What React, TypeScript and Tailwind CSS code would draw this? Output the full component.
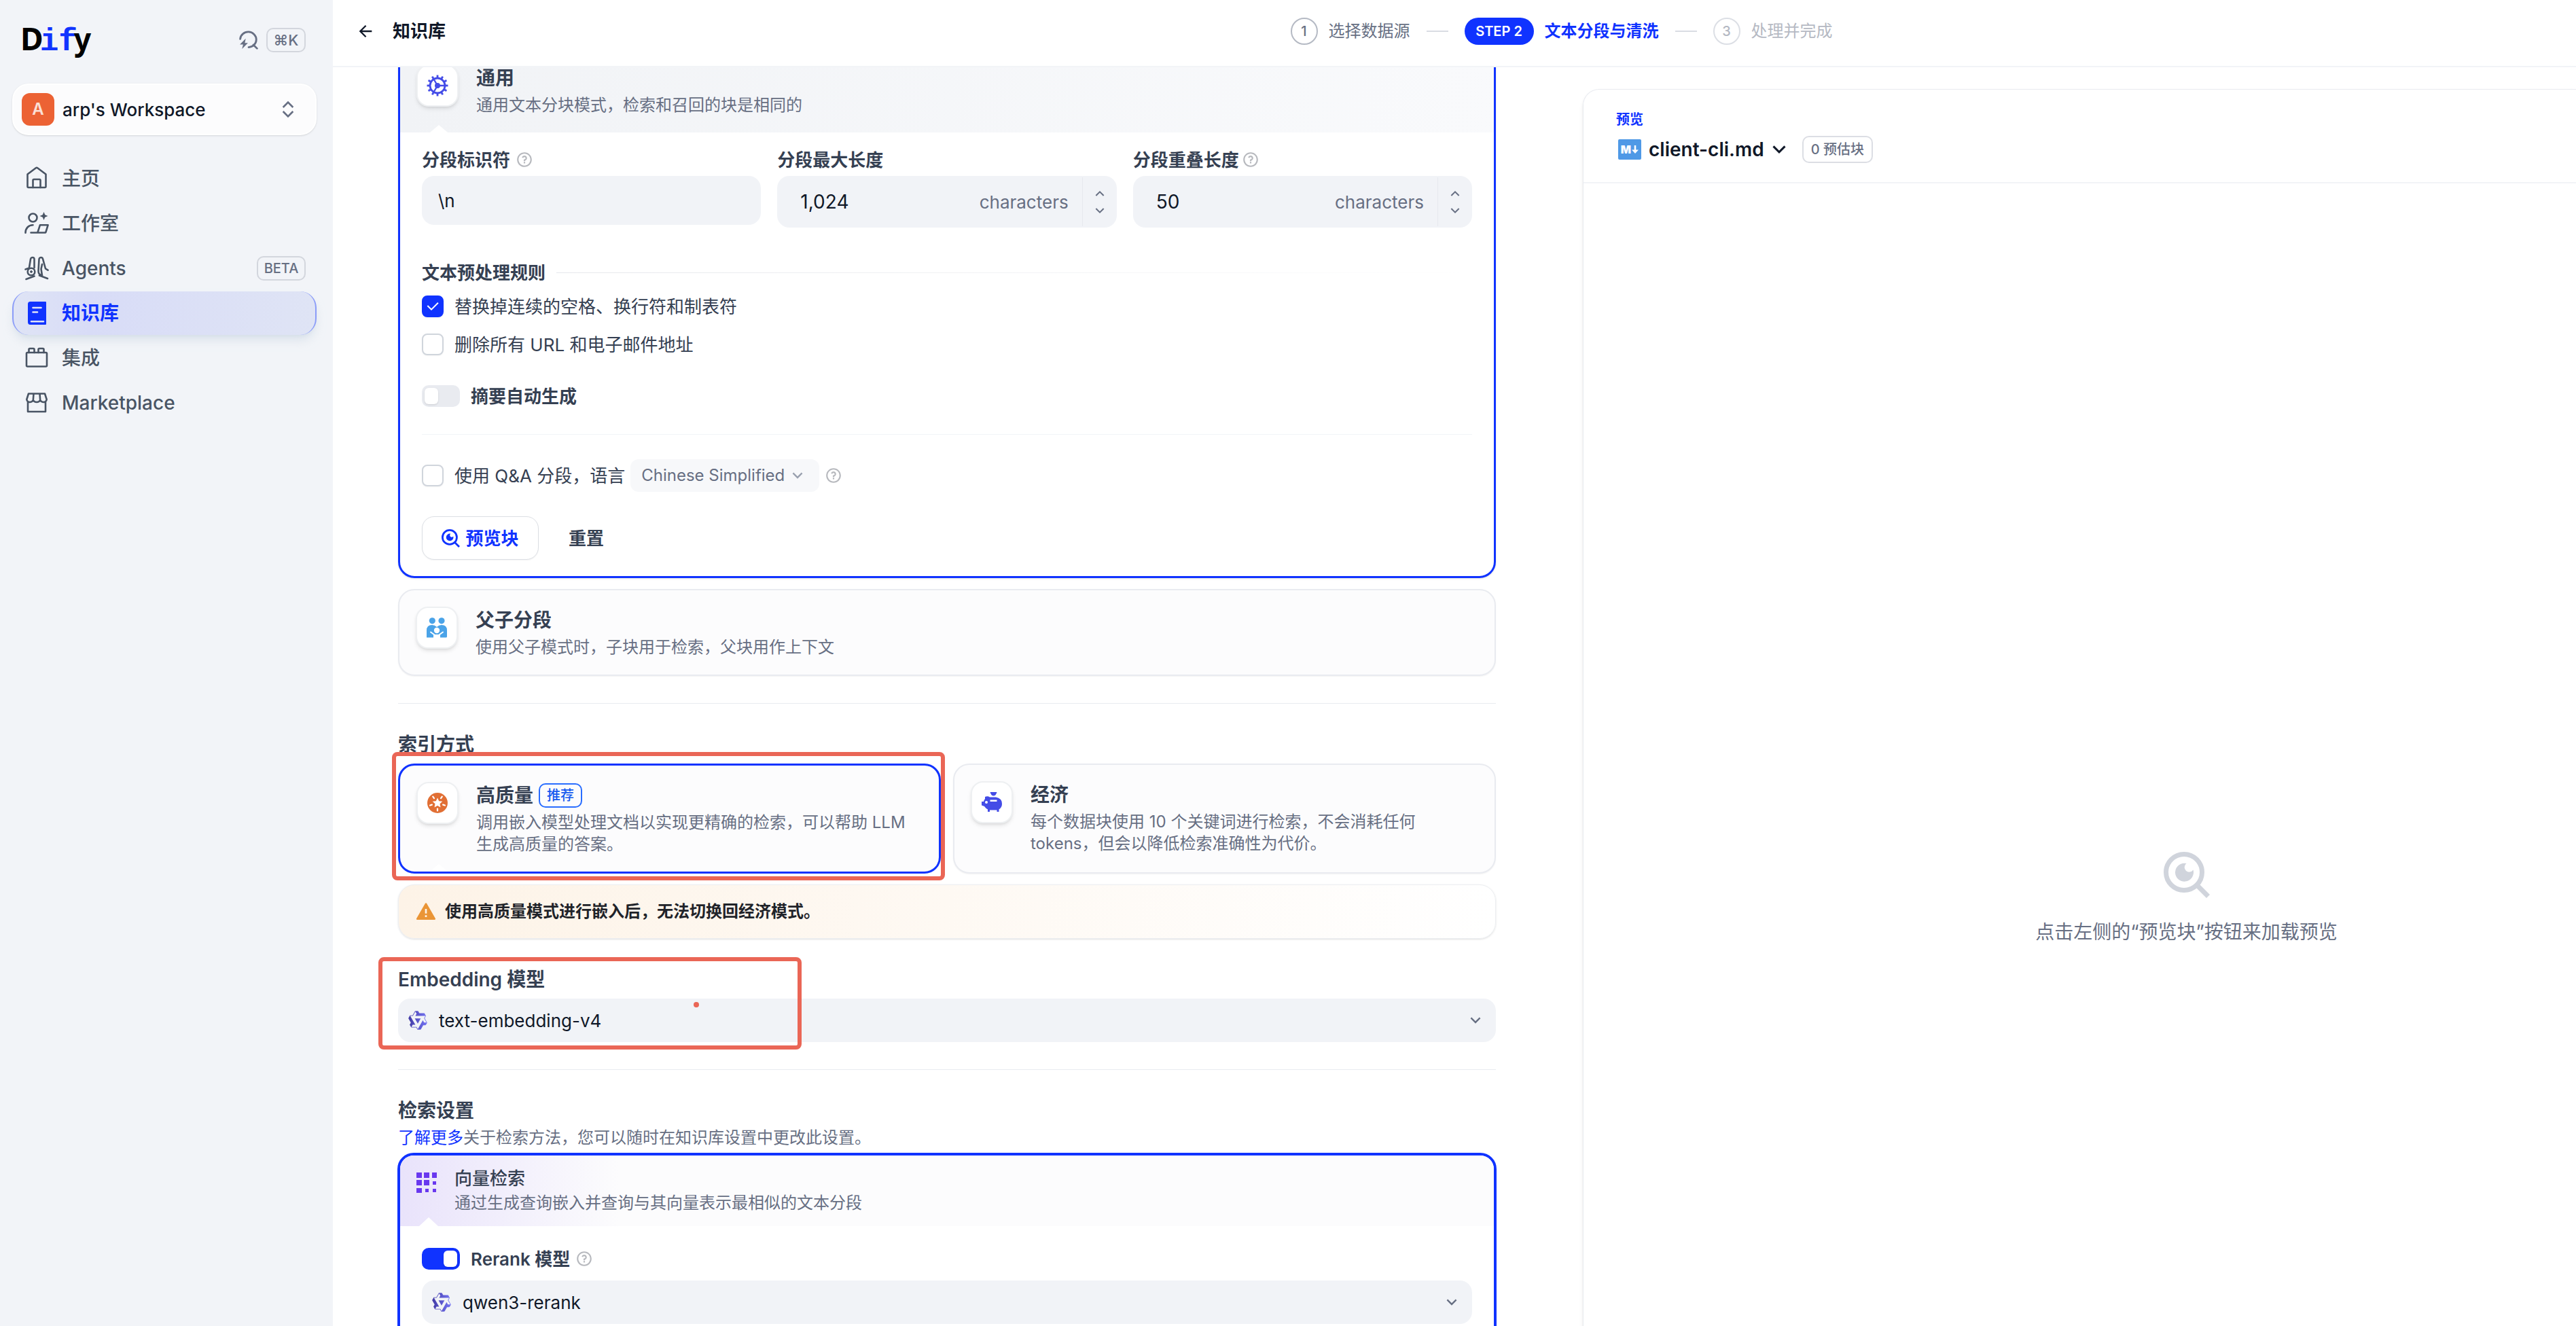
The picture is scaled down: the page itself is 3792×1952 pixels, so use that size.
import { useState } from 'react';
import type { ReactNode } from 'react';
import {
  RiAlertFill,
  RiArrowDownSLine,
  RiArrowLeftLine,
  RiArrowUpSLine,
  RiCheckLine,
  RiExpandUpDownLine,
  RiQuestionLine
} from 'react-icons/ri';

const stroke = {
  fill: 'none',
  stroke: 'currentColor',
  strokeWidth: 2.6,
  strokeLinecap: 'round',
  strokeLinejoin: 'round'
} as const;

const HomeIcon = () => (
  <svg viewBox="0 0 36 36" className="size-9" {...stroke}>
    <path d="M4.5 11.5 16.8 2.3q1.2-.9 2.4 0L31.5 11.5V29.5q0 1.5-1.5 1.5H6q-1.5 0-1.5-1.5Z" />
    <path d="M12.5 31V20.5q0-1.5 1.5-1.5h8q1.5 0 1.5 1.5V31" />
  </svg>
);

const StudioIcon = () => (
  <svg viewBox="0 0 36 36" className="size-9" {...stroke}>
    <circle cx="12.5" cy="9.5" r="6" />
    <path d="M1.5 31.800C1.5 25 6 20.3 12.5 20.3M9.5 31.5h9.8M19.3 31.5l3.6-11.2H34.6L31.5 30.5q-.3 1-1.3 1H19.3" />
    <path d="M28.5 1l1.8 4.2 4.2 1.8-4.2 1.8-1.8 4.2-1.8-4.2L22.5 7l4.2-1.8Z" fill="currentColor" stroke="none" />
  </svg>
);

const AgentsIcon = () => (
  <svg viewBox="0 0 36 36" className="size-9" {...stroke}>
    <path d="M7 17 9 4.5Q9.5 2 12 2q2.5 0 2.5 2.5V17M1.5 19.5l5-1.8M2.5 34l12-4.5" />
    <circle cx="10" cy="23" r="5.3" />
    <circle cx="10" cy="23" r="1.4" fill="currentColor" strokeWidth="1" />
    <path d="M26 28.5q-5.5-1-5.5-6.5L21.5 4.5Q22 2 24.5 2q2 0 2.6 2.3L31 18.5l3.5 2.2M26 12l-1.500 7 1.5 9.5M22 28.5l12 4.5" />
  </svg>
);

const KnowledgeIcon = () => (
  <svg viewBox="0 0 36 36" className="size-9">
    <path fill="currentColor" d="M8.5 1H31q1 0 1 1v32q0 1-1 1H8.5Q5 35 5 31V4.5Q5 1 8.5 1Z" />
    <path d="M12.5 10h12M12.5 16.5h6.5M10 30.2h18" stroke="#dfe3f7" strokeWidth="2.6" strokeLinecap="round" />
  </svg>
);

const IntegrationIcon = () => (
  <svg viewBox="0 0 36 36" className="size-9" {...stroke}>
    <rect x="3" y="10" width="30" height="20.5" rx="1.5" />
    <path d="M6.5 10V5.5q0-1.5 1.5-1.5h5q1.5 0 1.5 1.5V10M20.5 10V5.5q0-1.5 1.5-1.5h5q1.5 0 1.5 1.5V10" />
  </svg>
);

const MarketIcon = () => (
  <svg viewBox="0 0 36 36" className="size-9" {...stroke}>
    <path d="M6 4.5h24l2.7 8.5q-.7 4-4.5 4-3.5 0-5-3-1.5 3-5.2 3t-5.2-3q-1.5 3-5 3-3.800 0-4.5-4ZM13.5 4.5 12.8 14M22.5 4.5 23.2 14M5 17v14h26V17" />
  </svg>
);

const SearchIcon = () => (
  <svg viewBox="0 0 26 26" className="size-7" {...stroke}>
    <path d="M1.5 11.5a11 10.5 0 1 1 11.5 11.3M19.5 19.5l5 5" />
    <path d="M9 11 1 19h4.5L4 25l8-8H7.8Z" fill="currentColor" stroke="none" />
  </svg>
);

const GearIcon = () => (
  <svg viewBox="0 0 32 32" className="size-8 text-[#444ce7]" fill="none" stroke="currentColor">
    <circle cx="16" cy="16" r="11" strokeWidth="2.8" />
    <circle cx="16" cy="16" r="4" fill="currentColor" stroke="none" />
    <path d="M16 16h11M16 16l-5.5-9.5M16 16l-5.5 9.5" strokeWidth="2.4" />
    {Array.from({ length: 12 }).map((_, i) => (
      <path key={i} d="M16 .5v4" strokeWidth="2.8" transform={`rotate(${i * 30} 16 16)`} />
    ))}
  </svg>
);

const FamilyIcon = () => (
  <svg viewBox="0 0 30 30" className="size-[30px]">
    <g fill="#4aa3e8">
      <circle cx="8.3" cy="4.8" r="4.6" />
      <circle cx="22" cy="4.8" r="4.6" />
      <path d="M0 29.5V19q0-8 8-8 4 0 7 3 3-3 7-3 8 0 8 8v9q0 1.5-1.5 1.5Z" />
    </g>
    <circle cx="15" cy="19" r="4.2" fill="#fff" />
    <path d="M6 21.5l5.5 4M24 21.5l-5.5 4" stroke="#fff" strokeWidth="2" strokeLinecap="round" />
    <path d="M10 30v-4l2-1h6l2 1v4Z" fill="#fff" />
  </svg>
);

const QualityIcon = () => (
  <svg viewBox="0 0 30 30" className="size-[30px]">
    <circle cx="15" cy="15" r="15" fill="#e16f34" />
    <path d="M15 7.5l2.2 4.7 5.1.6-3.8 3.5 1 5.1L15 18.9l-4.5 2.5 1-5.1-3.8-3.5 5.1-.6Z" fill="#fff" />
    {Array.from({ length: 5 }).map((_, i) => (
      <path key={i} d="M15 23.5v3" stroke="#fff" strokeWidth="2.2" strokeLinecap="round" transform={`rotate(${i * 72} 15 15)`} />
    ))}
  </svg>
);

const PiggyIcon = () => (
  <svg viewBox="0 0 30 30" className="size-[30px]">
    <path
      fill="#444ce7"
      d="M12.5 0h10q-1.5 5.5-5 5.5t-5-5.5ZM5 7q4-1.5 7 .5h9q9 1.5 9 10 0 5-4.5 8V29h-3v-2.5H12V29H9v-3.5Q6 24 4 21L0 19.5V14h3q.5-2.5 2-4Z"
    />
    <circle cx="7" cy="15" r="2" fill="#fff" />
    <path d="M12.5 11.5h10V14h-10Z" fill="#fff" />
  </svg>
);

const VectorIcon = () => (
  <svg viewBox="0 0 30 30" className="mt-[7px] size-[30px] shrink-0" fill="#6938ef">
    <path d="M0 0h8v8H0ZM11 0h8v8h-8ZM23 0h7v8h-7ZM0 11h8v8H0ZM11 11h8v8h-8ZM24 13h5v5h-5ZM0 23h8v7H0ZM13 24h5v5h-5ZM24 24h5v5h-5Z" />
  </svg>
);

const PreviewIcon = ({ className }: { className: string }) => (
  <svg viewBox="0 0 68 68" className={className} fill="none" stroke="currentColor">
    <circle cx="30" cy="30" r="26.5" strokeWidth="7" />
    <path d="M49 49l16.5 16.5" strokeWidth="7" />
    <path d="M33.5 17A13.5 13.5 0 1 0 43.5 26.5 7 7 0 1 1 33.5 17Z" fill="currentColor" stroke="none" />
  </svg>
);

const QwenIcon = () => (
  <svg viewBox="0 0 24 24" className="size-[30px] shrink-0">
    <defs>
      <linearGradient id="qwen" x1="0" x2="1">
        <stop offset="0" stopColor="#423aa5" />
        <stop offset="1" stopColor="#7474f4" />
      </linearGradient>
    </defs>
    <path
      fill="url(#qwen)"
      fillRule="evenodd"
      d="M12.604 1.34c.393.69.784 1.382 1.174 2.075a.18.18 0 00.157.091h5.552c.174 0 .322.11.446.327l1.454 2.57c.19.337.24.478.024.837-.26.43-.513.864-.76 1.3l-.367.658c-.106.196-.223.28-.04.512l2.652 4.637c.172.301.111.494-.043.77-.437.785-.882 1.564-1.335 2.34-.159.272-.352.375-.68.37-.777-.016-1.552-.01-2.327.016a.099.099 0 00-.081.05 575.097 575.097 0 01-2.705 4.74c-.169.293-.38.363-.725.364-.997.003-2.002.004-3.017.002a.537.537 0 01-.465-.271l-1.335-2.323a.09.09 0 00-.083-.049H4.982c-.285.03-.553-.001-.805-.092l-1.603-2.77a.543.543 0 01-.002-.54l1.207-2.12a.198.198 0 000-.197 550.951 550.951 0 01-1.875-3.272l-.79-1.395c-.16-.31-.173-.496.095-.965.465-.813.927-1.625 1.387-2.436.132-.234.304-.334.584-.335a338.3 338.3 0 012.589-.001.124.124 0 00.107-.063l2.806-4.895a.488.488 0 01.422-.246c.524-.001 1.053 0 1.583-.006L11.704 1c.341-.003.724.032.9.34zm-3.432.403a.06.06 0 00-.052.03L6.254 6.788a.157.157 0 01-.135.078H3.253c-.056 0-.07.025-.041.074l5.81 10.156c.025.042.013.062-.034.063l-2.795.015a.218.218 0 00-.2.116l-1.32 2.31c-.044.078-.021.118.068.118l5.716.008c.046 0 .08.02.104.061l1.403 2.454c.046.081.092.082.139 0l5.006-8.76.783-1.382a.055.055 0 01.096 0l1.424 2.53a.122.122 0 00.107.062l2.763-.02a.04.04 0 00.035-.02.041.041 0 000-.04l-2.9-5.086a.108.108 0 010-.113l.293-.507 1.12-1.977c.024-.041.012-.062-.035-.062H9.2c-.059 0-.073-.026-.043-.077l1.434-2.505a.107.107 0 000-.114L9.225 1.774a.06.06 0 00-.053-.031zm6.29 8.02c.046 0 .058.02.034.06l-.832 1.465-2.613 4.585a.056.056 0 01-.05.029.058.058 0 01-.05-.029L8.498 9.841c-.02-.034-.01-.052.028-.054l.216-.012 6.722-.012z"
    />
  </svg>
);

const navItems = [
  { label: '主页', icon: HomeIcon },
  { label: '工作室', icon: StudioIcon },
  { label: 'Agents', icon: AgentsIcon, badge: 'BETA' },
  { label: '知识库', icon: KnowledgeIcon, active: true },
  { label: '集成', icon: IntegrationIcon },
  { label: 'Marketplace', icon: MarketIcon }
];

function Sidebar() {
  return (
    <aside className="w-[490px] shrink-0 bg-[#f2f4f8] pl-[18px] pr-6">
      <div className="flex h-[123px] items-start justify-between pl-3 pr-4 pt-[30px]">
        <a href="#" aria-label="Dify" className="flex items-baseline text-[46px] leading-[52px] text-black">
          <span className="font-['Noto_Sans'] font-bold">D</span>
          <span className="-mx-[5px] font-['Liberation_Mono'] font-bold text-[#1033ff]">if</span>
          <span className="font-['Noto_Sans'] text-[44px] font-bold">y</span>
        </a>
        <button type="button" className="mt-[11px] flex items-center gap-3 text-[#676f83]">
          <SearchIcon />
          <kbd className="flex h-9 w-[58px] items-center justify-center rounded-[10px] border-2 border-[#d3d6dd] font-[Inter] text-[22px] font-medium">
            ⌘K
          </kbd>
        </button>
      </div>
      <button
        type="button"
        className="flex h-[76px] w-full items-center gap-3 rounded-3xl border-2 border-white bg-[#fcfcfd] px-3 text-[26px] font-medium text-[#101828] shadow-sm"
      >
        <span className="flex size-12 items-center justify-center rounded-xl bg-[#ec6234] text-[24px] font-semibold text-white/80">A</span>
        <span className="flex-1 text-left">arp's Workspace</span>
        <RiExpandUpDownLine className="mr-3 size-8 text-[#676f83]" />
      </button>
      <nav className="mt-8 flex flex-col gap-[2px]">
        {navItems.map((item) => (
          <a
            key={item.label}
            href="#"
            className={
              item.active
                ? 'flex h-16 items-center rounded-3xl border-x-2 border-x-[#8b9cf8] bg-linear-to-r from-[#dfe4f5] via-[#d8dcf7] via-25% to-[#dfe4f5] pl-4 pr-[14px] text-[28px] font-bold text-[#1033ff] shadow-lg shadow-slate-300/60'
                : 'flex h-16 items-center pl-[18px] pr-4 text-[28px] font-medium text-[#495464]'
            }
          >
            <item.icon />
            <span className="ml-[19px] flex-1">{item.label}</span>
            {item.badge && (
              <span className="flex h-9 w-[72px] items-center justify-center rounded-[10px] border-2 border-[#d3d6dd] text-[20px] font-medium text-[#676f83]">
                {item.badge}
              </span>
            )}
          </a>
        ))}
      </nav>
    </aside>
  );
}

function Header() {
  return (
    <header className="flex h-[99px] items-center border-b-2 border-[#f2f4f7] pb-[6px]">
      <button type="button" className="flex w-[315px] shrink-0 items-center gap-[26px] pl-[34px] text-[26px] font-bold text-[#101828]">
        <RiArrowLeftLine className="size-7" />
        知识库
      </button>
      <ol className="flex flex-1 items-center justify-center gap-6 text-[24px]">
        <li className="flex items-center gap-4 text-[#676f83]">
          <span className="flex size-10 items-center justify-center rounded-full border-2 border-[#b5bac4] text-[20px] font-medium">1</span>
          选择数据源
        </li>
        <li aria-hidden className="h-[2px] w-8 bg-[#d9dce3]" />
        <li className="flex items-center gap-4 font-bold text-[#1033ff]">
          <span className="flex h-10 w-[102px] items-center justify-center rounded-full bg-[#1033ff] text-[20px] font-semibold text-white">STEP 2</span>
          文本分段与清洗
        </li>
        <li aria-hidden className="h-[2px] w-8 bg-[#d9dce3]" />
        <li className="flex items-center gap-4 text-[#b5b9c3]">
          <span className="flex size-10 items-center justify-center rounded-full border-2 border-[#dcdfe5] text-[20px] font-medium">3</span>
          处理并完成
        </li>
      </ol>
    </header>
  );
}

const Help = () => <RiQuestionLine className="size-[26px] text-[#b7b9be]" />;

function OptionHead({ icon, title, badge, children }: { icon: ReactNode; title: string; badge?: string; children: ReactNode }) {
  return (
    <div className="flex items-start gap-[26px] p-6">
      <span className="flex size-[62px] shrink-0 items-center justify-center rounded-[18px] border-2 border-[#eef0f2] bg-white shadow-md">{icon}</span>
      <div className="pt-1">
        <h3 className="flex h-8 items-center gap-2 text-[28px] font-semibold text-[#354052]">
          {title}
          {badge && <span className="rounded-[10px] border-2 border-[#296dff] px-[10px] text-[20px] font-medium leading-8 text-[#155aef]">{badge}</span>}
        </h3>
        <p className="mt-2 text-[24px] leading-8 text-[#676f83]">{children}</p>
      </div>
    </div>
  );
}

// small triangle that joins a card's head to its body
const Notch = () => <span className="absolute bottom-0 left-11 size-0 border-x-[13px] border-b-[11px] border-x-transparent border-b-white" />;

function NumberField({ id, label, help, value }: { id: string; label: string; help?: boolean; value: string }) {
  return (
    <div>
      <label htmlFor={id} className="flex h-8 items-center gap-1 text-[26px] font-semibold text-[#354052]">
        {label}
        {help && <Help />}
      </label>
      <div className="mt-2 flex h-[76px] items-center rounded-[18px] bg-[#f1f3f7]">
        <input id={id} defaultValue={value} className="w-0 flex-1 bg-transparent pl-[34px] text-[28px] text-[#101828] outline-none" />
        <span className="text-[26px] text-[#676f83]">characters</span>
        <span className="ml-5 flex h-[72px] w-[51px] flex-col items-center justify-center gap-px border-l border-[#e6e9ee] text-[#676f83]">
          <button type="button" aria-label="增加">
            <RiArrowUpSLine className="size-6" />
          </button>
          <button type="button" aria-label="减少">
            <RiArrowDownSLine className="size-6" />
          </button>
        </span>
      </div>
    </div>
  );
}

function Checkbox({ label, defaultChecked }: { label: string; defaultChecked?: boolean }) {
  return (
    <label className="flex h-8 items-center gap-4 text-[26px] text-[#354052]">
      <span className="grid place-items-center">
        <input
          type="checkbox"
          defaultChecked={defaultChecked}
          className="peer col-start-1 row-start-1 size-8 appearance-none rounded-lg border-2 border-[#d0d5dc] bg-white shadow-xs checked:border-[#1033ff] checked:bg-[#1033ff]"
        />
        <RiCheckLine className="pointer-events-none col-start-1 row-start-1 hidden size-6 text-white peer-checked:block" />
      </span>
      {label}
    </label>
  );
}

function Switch({ label, on, help }: { label: string; on?: boolean; help?: boolean }) {
  const [checked, setChecked] = useState(!!on);

  return (
    <label className="flex h-8 items-center gap-4 text-[26px] font-semibold text-[#354052]">
      <input
        type="checkbox"
        role="switch"
        checked={checked}
        onChange={(e) => setChecked(e.target.checked)}
        className="flex h-8 w-14 appearance-none items-center rounded-[10px] bg-[#e9ebf0] px-1 before:block before:h-6 before:w-5 before:rounded-md before:bg-white before:shadow-sm before:content-[''] checked:justify-end checked:bg-[#1033ff]"
      />
      <span className="flex items-center gap-2">
        {label}
        {help && <Help />}
      </span>
    </label>
  );
}

function ModelSelect({ label, model }: { label: string; model: string }) {
  return (
    <div className="flex h-16 items-center gap-4 rounded-[18px] bg-[#f1f3f7] pl-[14px] pr-4">
      <QwenIcon />
      <select aria-label={label} className="flex-1 appearance-none bg-transparent text-[26px] text-[#101828] outline-none">
        <option>{model}</option>
      </select>
      <RiArrowDownSLine className="pointer-events-none size-7 text-[#676f83]" />
    </div>
  );
}

function GeneralCard() {
  return (
    <section className="-mt-[31px] rounded-3xl border-3 border-[#1033ff] shadow-sm">
      <div className="relative rounded-t-[21px] bg-linear-to-r from-[#f1f3f6] to-[#f9fafc]">
        <OptionHead icon={<GearIcon />} title="通用">
          通用文本分块模式，检索和召回的块是相同的
        </OptionHead>
        <Notch />
      </div>
      <div className="px-8 py-6">
        <div className="grid grid-cols-3 gap-6">
          <div>
            <label htmlFor="separator" className="flex h-8 items-center gap-2 text-[26px] font-semibold text-[#354052]">
              分段标识符
              <Help />
            </label>
            <input
              id="separator"
              defaultValue="\n"
              className="mt-2 block h-[72px] w-full rounded-[18px] bg-[#f1f3f7] px-6 text-[26px] text-[#101828] outline-none"
            />
          </div>
          <NumberField id="max-length" label="分段最大长度" value="1,024" />
          <NumberField id="overlap" label="分段重叠长度" help value="50" />
        </div>
        <div className="mt-12 flex h-9 items-center gap-4 text-[26px] font-bold text-[#354052]">
          文本预处理规则
          <span className="h-px flex-1 bg-linear-to-r from-[#e6e8ec] to-transparent" />
        </div>
        <div className="mt-4 flex flex-col gap-6">
          <Checkbox label="替换掉连续的空格、换行符和制表符" defaultChecked />
          <Checkbox label="删除所有 URL 和电子邮件地址" />
        </div>
        <div className="mt-11">
          <Switch label="摘要自动生成" />
        </div>
        <hr className="mt-10 border-[#f2f4f7]" />
        <div className="mt-9 flex items-center">
          <Checkbox label="使用 Q&A 分段，语言" />
          <div className="ml-2 flex h-12 items-center rounded-xl bg-[#f7f8fa] pl-4 pr-[18px] text-[#676f83]">
            <select aria-label="语言" className="appearance-none bg-transparent text-[24px] outline-none">
              <option>Chinese Simplified</option>
            </select>
            <RiArrowDownSLine className="pointer-events-none ml-1 size-7 text-[#9aa1af]" />
          </div>
          <span className="ml-2">
            <Help />
          </span>
        </div>
        <div className="mt-9 flex gap-4 text-[26px] font-semibold">
          <button type="button" className="flex h-16 w-[172px] items-center justify-center gap-2 rounded-[18px] border border-[#dcdfe4] bg-white text-[#1033ff] shadow-xs">
            <PreviewIcon className="size-[27px]" />
            预览块
          </button>
          <button type="button" className="h-16 px-7 text-[#354052]">
            重置
          </button>
        </div>
      </div>
    </section>
  );
}

const SectionTitle = ({ children }: { children: ReactNode }) => (
  <h2 className="mt-10 h-10 text-[28px] font-semibold leading-10 text-[#354052]">{children}</h2>
);

function Settings() {
  return (
    <div className="pl-24 pr-32">
      <GeneralCard />
      <section className="mt-4 rounded-3xl border-2 border-[#e9ebf0] bg-[#fcfcfd] shadow-xs">
        <OptionHead icon={<FamilyIcon />} title="父子分段">
          使用父子模式时，子块用于检索，父块用作上下文
        </OptionHead>
      </section>
      <hr className="mt-10 border-[#e9ebf0]" />

      <SectionTitle>索引方式</SectionTitle>
      <div className="mt-2 grid grid-cols-2 gap-[18px]">
        <div className="relative rounded-3xl border-3 border-[#1033ff] bg-[#fcfcfd]">
          <OptionHead icon={<QualityIcon />} title="高质量" badge="推荐">
            调用嵌入模型处理文档以实现更精确的检索，可以帮助 LLM
            <br />
            生成高质量的答案。
          </OptionHead>
          <Notch />
          <span className="pointer-events-none absolute -bottom-[13px] -left-3 -right-[9px] -top-5 rounded-lg border-6 border-[#ea6656]" />
        </div>
        <div className="rounded-3xl border-2 border-[#e9ebf0] bg-[#fcfcfd] shadow-xs">
          <OptionHead icon={<PiggyIcon />} title="经济">
            每个数据块使用 10 个关键词进行检索，不会消耗任何
            <br />
            tokens，但会以降低检索准确性为代价。
          </OptionHead>
        </div>
      </div>
      <div className="mt-4 flex h-20 items-center gap-3 rounded-3xl border border-[#eceef1] bg-linear-to-r from-[#fdf3e7] to-white px-6 text-[24px] font-semibold text-[#1f2329] shadow-sm">
        <RiAlertFill className="size-8 text-[#ea9536]" />
        使用高质量模式进行嵌入后，无法切换回经济模式。
      </div>

      <section className="relative">
        <SectionTitle>Embedding 模型</SectionTitle>
        <div className="mt-2">
          <ModelSelect label="Embedding 模型" model="text-embedding-v4" />
        </div>
        <span className="pointer-events-none absolute -left-[29px] -top-[13px] h-[136px] w-[623px] rounded-lg border-6 border-[#ea6656]" />
        <span className="pointer-events-none absolute left-[435px] top-[53px] size-2 rounded-full bg-[#ea6656]" />
      </section>
      <hr className="mt-10 border-[#e9ebf0]" />

      <SectionTitle>检索设置</SectionTitle>
      <p className="mt-1 text-[24px] leading-8 text-[#676f83]">
        <a href="#" className="text-[#1033ff]">
          了解更多
        </a>
        关于检索方法，您可以随时在知识库设置中更改此设置。
      </p>
      <section className="-mx-px mt-[6px] rounded-3xl border-4 border-[#1033ff]">
        <div className="relative flex gap-[26px] rounded-t-[20px] bg-[#fcfcfd] bg-linear-to-r from-[#e9e3fb] to-transparent to-20% px-6 py-[18px]">
          <VectorIcon />
          <div>
            <h3 className="text-[26px] font-medium leading-8 text-[#354052]">向量检索</h3>
            <p className="mt-1 text-[24px] leading-8 text-[#676f83]">通过生成查询嵌入并查询与其向量表示最相似的文本分段</p>
          </div>
          <span className="absolute bottom-0 left-[28px] size-0 border-x-[14px] border-b-[13px] border-x-transparent border-b-white" />
        </div>
        <div className="px-8 py-8">
          <Switch label="Rerank 模型" on help />
          <div className="mt-4">
            <ModelSelect label="Rerank 模型" model="qwen3-rerank" />
          </div>
        </div>
      </section>
    </div>
  );
}

function Preview() {
  return (
    <aside className="mt-8 flex flex-col rounded-tl-3xl border-l border-t border-[#e9ebf0] shadow-md">
      <div className="border-b-2 border-[#f2f4f7] pb-7 pl-12 pt-7">
        <p className="h-8 text-[20px] font-bold leading-8 text-[#1033ff]">预览</p>
        <div className="mt-2 flex h-10 items-center">
          <span className="ml-[3px] flex h-[30px] w-[34px] items-center justify-center gap-px rounded-xs bg-[#4f99e6] text-white">
            <span className="text-[16px] font-black leading-none">M</span>
            <svg viewBox="0 0 10 12" className="h-3 w-[10px] shrink-0" fill="none" stroke="currentColor" strokeWidth="2.6">
              <path d="M5 0v8" />
              <path d="M0 6.5h10L5 12Z" fill="currentColor" stroke="none" />
            </svg>
          </span>
          <button type="button" className="ml-[11px] flex items-center gap-1 text-[28px] font-semibold text-[#101828]">
            client-cli.md
            <RiArrowDownSLine className="size-9" />
          </button>
          <span className="ml-4 flex h-10 items-center rounded-[10px] border-2 border-[#dcdee4] px-[11px] text-[20px] font-medium text-[#676f83]">0 预估块</span>
        </div>
      </div>
      <div className="flex flex-1 flex-col items-center pl-[314px] pt-[984px]">
        <PreviewIcon className="size-[68px] text-[#d0d4dc]" />
        <p className="mt-[30px] text-[28px] leading-10 text-[#676f83]">点击左侧的“预览块”按钮来加载预览</p>
      </div>
    </aside>
  );
}

export default function App() {
  return (
    <div className="flex h-screen overflow-hidden bg-white font-[Inter,'Noto_Sans_CJK_SC',sans-serif]">
      <Sidebar />
      <main className="flex min-w-0 flex-1 flex-col">
        <Header />
        <div className="grid min-h-0 flex-1 grid-cols-[1840fr_1462fr] overflow-hidden">
          <Settings />
          <Preview />
        </div>
      </main>
    </div>
  );
}
